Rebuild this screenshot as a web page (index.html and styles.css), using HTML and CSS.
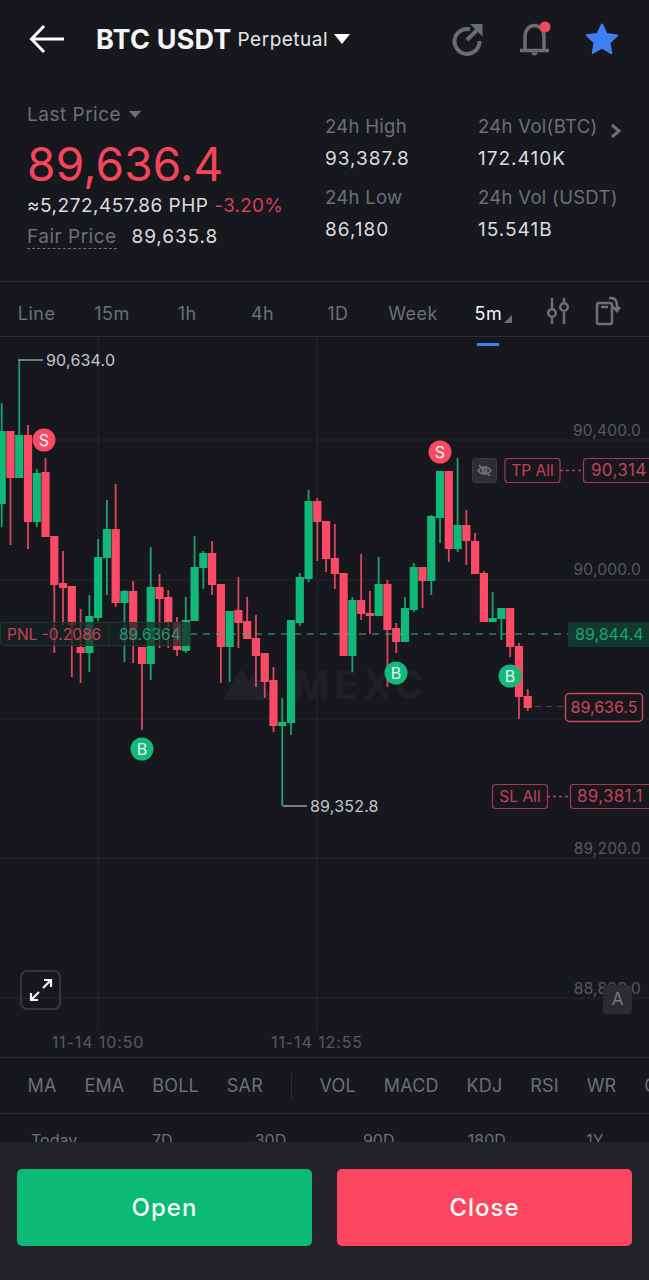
FILE: index.html
```html
<!DOCTYPE html>
<html lang="en">
<head>
  <meta charset="UTF-8" />
  <meta name="viewport" content="width=device-width, initial-scale=1.0">
  <title>BTC USDT Perpetual</title>
  <link rel="stylesheet" href="styles.css">
</head>
<body>
  <div class="app">
    <header class="top-bar">
      <svg class="back-icon" viewBox="0 0 36 30" width="36" height="30">
        <path d="M35 15H3M15 2 2.500 15 15 28" />
      </svg>
      <span class="pair">BTC USDT</span>
      <span class="pair-type">Perpetual</span>
      <span class="caret"></span>
      <div class="top-icons">
        <svg viewBox="0 0 34 34" width="34" height="34" class="share-icon">
          <path d="M19 7.300A12.500 12.500 0 1 0 28.500 19" />
          <path d="M16 18 28 6" />
          <path class="share-head" d="M19 2h12.500v12.500z" />
        </svg>
        <svg viewBox="0 0 34 38" width="34" height="38" class="bell-icon">
          <path d="M7 29V17C7 10 11 5.500 16.500 5.500S26 10 26 17v12" />
          <path d="M2 30.500h29" />
          <path class="bell-clapper" d="M13.500 32.500h6a3 3 0 0 1-6 0z" />
          <circle cx="27" cy="7" r="5.500" />
        </svg>
        <svg viewBox="0 0 34 34" width="34" height="34" class="star-icon">
          <path d="M17 2.500l4.600 9.600 10.500 1.400-7.700 7.300 1.900 10.400L17 25.600 7.700 31l1.900-10.400-7.700-7.300 10.500-1.400z" />
        </svg>
      </div>
    </header>

    <section class="stats">
      <div class="stats-main">
        <div class="last-label">Last Price <span class="caret caret-small"></span></div>
        <div class="last-price">89,636.4</div>
        <div class="fiat">≈5,272,457.86 PHP <span class="change">-3.20%</span></div>
        <div class="fair"><span class="fair-label">Fair Price</span> <span class="fair-value">89,635.8</span></div>
      </div>
      <div class="stats-grid">
        <div class="stat"><div class="stat-label">24h High</div><div class="stat-value">93,387.8</div></div>
        <div class="stat"><div class="stat-label">24h Vol(BTC)</div><div class="stat-value">172.410K</div></div>
        <div class="stat"><div class="stat-label">24h Low</div><div class="stat-value">86,180</div></div>
        <div class="stat"><div class="stat-label">24h Vol (USDT)</div><div class="stat-value">15.541B</div></div>
      </div>
      <svg class="more-icon" viewBox="0 0 12 16" width="12" height="16"><path d="M2 2l7 6-7 6" /></svg>
    </section>

    <nav class="tabs">
      <div class="tab-list">
        <span class="tab">Line</span>
        <span class="tab">15m</span>
        <span class="tab">1h</span>
        <span class="tab">4h</span>
        <span class="tab">1D</span>
        <span class="tab">Week</span>
        <span class="tab tab-active">5m<i class="tab-corner"></i></span>
      </div>
      <svg class="tab-icon" viewBox="0 0 22 28" width="22" height="28">
        <path d="M5 1v10M5 21v6M17 1v4M17 15v12" />
        <circle cx="5" cy="16" r="3.800" />
        <circle cx="17" cy="10" r="3.800" />
      </svg>
      <svg class="tab-icon" viewBox="0 0 26 30" width="26" height="30">
        <rect x="2" y="7" width="15" height="21" rx="2" />
        <path d="M6 11h7M14 2h2c4 0 6 3 6 8v4M18 11l4 4 3-4" />
      </svg>
    </nav>

    <div class="chart">
      <svg class="chart-svg" viewBox="0 337 649 720" width="649" height="720">
        <g class="grid-lines">
          <path d="M0 440H649M0 580H649M0 719H649M0 858H649M0 998H649M98 337V1030M317 337V1030" />
        </g>
        <g class="watermark">
          <path d="M224 700q0-2 1-4l14-24q2-3 4-1l6 10 5-8 20 27z" />
          <text x="293" y="699" class="watermark-text">MEXC</text>
        </g>
        <g id="candles"></g>

        <path class="leader" d="M18 360H43M283 806H307" />
        <text x="46" y="366" class="hi-lo">90,634.0</text>
        <text x="310" y="812" class="hi-lo">89,352.8</text>

        <g class="badge-sell"><circle cx="44" cy="440" r="11.500" /><text x="44" y="446">S</text></g>
        <g class="badge-sell"><circle cx="440" cy="452" r="11.500" /><text x="440" y="458">S</text></g>
        <g class="badge-buy"><circle cx="142" cy="749" r="11.500" /><text x="142" y="755">B</text></g>
        <g class="badge-buy"><circle cx="396" cy="673" r="11.500" /><text x="396" y="679">B</text></g>
        <g class="badge-buy"><circle cx="510" cy="676" r="11.500" /><text x="510" y="682">B</text></g>

        <text x="641" y="436" class="axis-label">90,400.0</text>
        <text x="641" y="575" class="axis-label">90,000.0</text>
        <text x="641" y="854" class="axis-label">89,200.0</text>
        <text x="641" y="994" class="axis-label">88,800.0</text>
        <text x="98" y="1048" class="date-label">11-14 10:50</text>
        <text x="317" y="1048" class="date-label">11-14 12:55</text>

        <path class="entry-line" d="M190 634H568" />
        <rect x="0.500" y="622.500" width="190" height="23" rx="3" class="pnl-box" />
        <path class="pnl-divider" d="M109 623V645" />
        <text x="7" y="640" class="pnl-text">PNL -0.2086</text>
        <text x="119" y="640" class="pnl-entry">89.6364</text>
        <rect x="568" y="622" width="85" height="25" rx="3" class="entry-tag" />
        <text x="575" y="640" class="entry-tag-text">89,844.4</text>

        <g class="eye-box">
          <rect x="472.500" y="458.500" width="24" height="24" rx="3" />
          <path d="M478 470.500c4-5 9-5 13 0-4 5-9 5-13 0z" />
          <circle cx="484.500" cy="470.500" r="2.200" />
          <path d="M479 465l11 11" />
        </g>

        <rect x="505" y="458.500" width="55" height="24" rx="3" class="order-box" />
        <text x="532.500" y="476" class="order-text">TP All</text>
        <path class="order-link" d="M560 470.500H583" />
        <rect x="583.500" y="458.500" width="80" height="24" rx="3" class="order-box" />
        <text x="591" y="476" class="order-price">90,314</text>

        <rect x="492.500" y="784.500" width="55" height="24" rx="3" class="order-box" />
        <text x="520" y="802" class="order-text">SL All</text>
        <path class="order-link" d="M547 796.500H570" />
        <rect x="570.500" y="784.500" width="90" height="24" rx="3" class="order-box" />
        <text x="577" y="802" class="order-price">89,381.1</text>

        <path class="price-link" d="M535 706.500H565" />
        <rect x="565.500" y="693.500" width="77" height="28" rx="4" class="price-box" />
        <text x="604" y="713" class="price-text">89,636.5</text>
      </svg>

      <div class="expand-btn">
        <svg viewBox="0 0 24 24" width="24" height="24">
          <path d="M14 10l8-8M15 2h7v7M10 14l-8 8M2 15v7h7" />
        </svg>
      </div>
      <div class="auto-btn">A</div>
    </div>

    <div class="indicators">
      <span>MA</span><span>EMA</span><span>BOLL</span><span>SAR</span>
      <i class="indicator-sep"></i>
      <span>VOL</span><span>MACD</span><span>KDJ</span><span>RSI</span><span>WR</span><span>OBV</span>
    </div>

    <div class="ranges">
      <span>Today</span><span>7D</span><span>30D</span><span>90D</span><span>180D</span><span>1Y</span>
    </div>

    <footer class="actions">
      <button class="action action-open">Open</button>
      <button class="action action-close">Close</button>
    </footer>
  </div>

  <script src="chart.js"></script>
</body>
</html>
```
FILE: styles.css
```css
* {
  box-sizing: border-box;
}
body {
  margin: 0;
  background: #17181d;
  font-family: 'Inter', 'Liberation Sans', sans-serif;
  color: #fff;
  overflow: hidden;
}
.app {
  width: 649px;
  height: 1280px;
  display: flex;
  flex-direction: column;
  overflow: hidden;
  position: relative;
}

/* top bar */
.top-bar {
  height: 78px;
  flex: none;
  display: flex;
  align-items: center;
  padding-left: 29px;
}
.back-icon {
  fill: none;
  stroke: #fff;
  stroke-width: 3;
  margin-right: 31px;
}
.pair {
  font-size: 27px;
  font-weight: 700;
  letter-spacing: 0.2px;
  color: #f4f4f5;
}
.pair-type {
  font-size: 19px;
  letter-spacing: 0.5px;
  margin-left: 6px;
  color: #e6e6e8;
}
.caret {
  width: 0;
  height: 0;
  margin-left: 6px;
  border-left: 8px solid transparent;
  border-right: 8px solid transparent;
  border-top: 10px solid #fff;
}
.caret-small {
  display: inline-block;
  margin-left: 2px;
  vertical-align: 3px;
  border-left-width: 6px;
  border-right-width: 6px;
  border-top: 7px solid #6c6f75;
}
.top-icons {
  margin-left: auto;
  margin-right: 30px;
  display: flex;
  align-items: center;
  gap: 33px;
}
.share-icon {
  fill: none;
  stroke: #696c72;
  stroke-width: 4;
}
.share-icon .share-head {
  fill: #696c72;
  stroke: none;
}
.bell-icon {
  fill: none;
  stroke: #696c72;
  stroke-width: 3.500;
}
.bell-icon .bell-clapper {
  fill: #696c72;
  stroke: none;
}
.bell-icon circle {
  fill: #f4485f;
  stroke: none;
}
.star-icon {
  fill: #3f7ff5;
  stroke: #3f7ff5;
  stroke-width: 2;
  stroke-linejoin: round;
}

/* price stats */
.stats {
  height: 204px;
  flex: none;
  display: flex;
  position: relative;
  border-bottom: 1px solid #2c2e33;
}
.stats-main {
  width: 325px;
  padding: 25px 0 0 27px;
}
.last-label {
  font-size: 19px;
  letter-spacing: 0.5px;
  color: #6c6f75;
  line-height: 24px;
}
.last-price {
  font-size: 46px;
  letter-spacing: 0.2px;
  line-height: 52px;
  margin-top: 11px;
  color: #f5455c;
}
.fiat {
  font-size: 19px;
  letter-spacing: 0.5px;
  line-height: 24px;
  margin-top: 4px;
  color: #dcdcde;
  white-space: nowrap;
}
.change {
  color: #d3405a;
  letter-spacing: 0.2px;
}
.fair {
  font-size: 19px;
  letter-spacing: 0.5px;
  line-height: 24px;
  margin-top: 7px;
  white-space: nowrap;
}
.fair-label {
  color: #6c6f75;
  border-bottom: 1px dashed #6c6f75;
  margin-right: 9px;
}
.fair-value {
  color: #dcdcde;
  letter-spacing: 0.9px;
}
.stats-grid {
  display: grid;
  grid-template-columns: 153px 1fr;
  grid-auto-rows: 71px;
  padding-top: 36px;
}
.stat-label {
  font-size: 18.500px;
  letter-spacing: 0.3px;
  line-height: 24px;
  color: #6c6f75;
  white-space: nowrap;
}
.stat-value {
  font-size: 19px;
  letter-spacing: 1px;
  line-height: 24px;
  margin-top: 9px;
  color: #dcdcde;
}
.more-icon {
  position: absolute;
  top: 45px;
  left: 610px;
  fill: none;
  stroke: #6c6f75;
  stroke-width: 3;
}

/* interval tabs */
.tabs {
  height: 55px;
  flex: none;
  display: flex;
  align-items: center;
  border-bottom: 1px solid #2c2e33;
}
.tab-list {
  display: grid;
  grid-template-columns: repeat(7, 75.3px);
  height: 100%;
  width: 547px;
  margin-left: -1px;
  margin-right: 1px;
}
.tab {
  font-size: 18px;
  letter-spacing: 0.5px;
  color: #6c6f75;
  text-align: center;
  line-height: 64px;
  position: relative;
}
.tab-active {
  color: #f4f4f5;
}
.tab-active::after {
  content: "";
  position: absolute;
  left: 26px;
  width: 22px;
  bottom: 0;
  height: 3px;
  background: #3f7ff5;
}
.tab-corner {
  position: absolute;
  left: 53px;
  top: 33px;
  width: 0;
  height: 0;
  border-left: 8px solid transparent;
  border-bottom: 8px solid #6c6f75;
}
.tab-icon {
  fill: none;
  stroke: #6c6f75;
  stroke-width: 2.500;
  margin-top: 4px;
}
.tab-icon + .tab-icon {
  margin-left: 26px;
}

/* chart */
.chart {
  height: 721px;
  flex: none;
  position: relative;
  border-bottom: 1px solid #2c2e33;
}
.chart-svg {
  display: block;
  font-family: 'Inter', 'Liberation Sans', sans-serif;
}
.grid-lines path {
  fill: none;
  stroke: #24262b;
  stroke-width: 1;
}
.watermark {
  fill: #212227;
}
.watermark-text {
  font-size: 39px;
  font-weight: 700;
  letter-spacing: 5px;
  fill: #1f2025;
}
.leader {
  fill: none;
  stroke: #9a9ca0;
  stroke-width: 1.500;
}
.hi-lo {
  font-size: 16px;
  letter-spacing: 0.2px;
  fill: #c4c5c8;
}
.badge-sell circle {
  fill: #f84a64;
}
.badge-buy circle {
  fill: #12b97b;
}
.badge-sell text,
.badge-buy text {
  font-size: 16px;
  fill: #e8f5ef;
  text-anchor: middle;
}
.axis-label {
  font-size: 15.500px;
  letter-spacing: 0.2px;
  fill: #55585e;
  text-anchor: end;
}
.date-label {
  font-size: 16px;
  letter-spacing: 0.9px;
  fill: #55585e;
  text-anchor: middle;
}
.entry-line {
  fill: none;
  stroke: rgba(50, 175, 130, 0.7);
  stroke-width: 1.500;
  stroke-dasharray: 7 6;
}
.pnl-box {
  fill: rgba(24, 36, 34, 0.72);
  stroke: #25352f;
}
.pnl-divider {
  stroke: #25352f;
}
.pnl-text {
  font-size: 15.500px;
  fill: #c2415a;
}
.pnl-entry {
  font-size: 15.500px;
  fill: #1f9a6f;
}
.entry-tag {
  fill: #113a2d;
}
.entry-tag-text {
  font-size: 16px;
  fill: #1fa274;
}
.eye-box rect {
  fill: #2c2e34;
  stroke: #3a3c42;
}
.eye-box path,
.eye-box circle {
  fill: none;
  stroke: #6e7177;
  stroke-width: 1.600;
}
.order-box {
  fill: #17181d;
  stroke: #a63a4c;
  stroke-width: 1.200;
}
.order-text {
  font-size: 15.500px;
  fill: #c2415a;
  text-anchor: middle;
}
.order-price {
  font-size: 17px;
  letter-spacing: 0.3px;
  fill: #c2415a;
}
.order-link {
  fill: none;
  stroke: #b83e52;
  stroke-width: 1.500;
  stroke-dasharray: 3 3;
}
.price-link {
  fill: none;
  stroke: #6a3540;
  stroke-width: 1.200;
  stroke-dasharray: 6 5;
}
.price-box {
  fill: #17181d;
  stroke: #d2445b;
  stroke-width: 1.500;
}
.price-text {
  font-size: 16px;
  fill: #d2445b;
  text-anchor: middle;
}
.expand-btn {
  position: absolute;
  left: 20px;
  top: 633px;
  width: 41px;
  height: 40px;
  border: 2px solid #33363c;
  border-radius: 7px;
  display: flex;
  align-items: center;
  justify-content: center;
}
.expand-btn svg {
  fill: none;
  stroke: #f1f1f2;
  stroke-width: 2.200;
}
.auto-btn {
  position: absolute;
  left: 603px;
  top: 648px;
  width: 29px;
  height: 29px;
  border-radius: 4px;
  background: #2a2c31;
  color: #75787e;
  font-size: 17px;
  line-height: 29px;
  text-align: center;
}

/* indicator row */
.indicators {
  height: 56px;
  flex: none;
  display: flex;
  align-items: center;
  gap: 27.800px;
  padding-left: 27.500px;
  font-size: 18px;
  letter-spacing: 0.2px;
  color: #6c6f75;
  white-space: nowrap;
  border-bottom: 1px solid #2c2e33;
}
.indicator-sep {
  width: 1px;
  height: 26px;
  flex: none;
  background: #2c2e33;
}

/* range row */
.ranges {
  flex: 1;
  display: grid;
  grid-template-columns: repeat(6, 108.200px);
  font-size: 16px;
  color: #6c6f75;
  text-align: center;
  line-height: 52px;
  overflow: hidden;
}

/* bottom buttons */
.actions {
  height: 138px;
  flex: none;
  display: flex;
  gap: 25px;
  padding: 27px 17px 34px;
  background: #212328;
}
.action {
  flex: 1;
  border: none;
  border-radius: 5px;
  color: #f2fbf7;
  font-family: inherit;
  font-size: 24px;
  font-weight: 500;
  letter-spacing: 1px;
}
.action-open {
  background: #0bba74;
}
.action-close {
  background: #fe4560;
}
```
FILE: chart.js
```js
// each row: colour, wick top, body top, body bottom, wick bottom (page y)
const candles = [
  ['g', 403, 431, 504, 527], ['r', 431, 431, 478, 545], ['g', 360, 435, 478, 478], ['r', 425, 435, 522, 549],
  ['g', 469, 473, 522, 527], ['r', 458, 472, 537, 537], ['r', 536, 536, 585, 653], ['r', 551, 583, 588, 625],
  ['r', 586, 586, 625, 677], ['r', 609, 647, 653, 683], ['g', 595, 616, 653, 672], ['g', 539, 557, 618, 621],
  ['g', 500, 529, 558, 595], ['r', 484, 529, 603, 607], ['g', 590, 591, 603, 662], ['r', 581, 591, 640, 663],
  ['r', 647, 647, 664, 730], ['g', 547, 587, 664, 680], ['r', 574, 587, 599, 648], ['r', 590, 597, 622, 648],
  ['r', 617, 622, 650, 656], ['g', 597, 620, 651, 653], ['g', 536, 567, 621, 621], ['g', 551, 553, 568, 589],
  ['r', 541, 553, 585, 595], ['r', 584, 584, 647, 683], ['g', 611, 611, 647, 682], ['r', 577, 610, 623, 648],
  ['r', 597, 621, 639, 639], ['r', 615, 638, 656, 687], ['r', 653, 653, 682, 698], ['r', 667, 680, 726, 732],
  ['g', 698, 722, 726, 806], ['g', 620, 620, 723, 735], ['g', 573, 577, 623, 626], ['g', 490, 501, 579, 582],
  ['r', 498, 501, 522, 561], ['r', 521, 521, 559, 572], ['r', 524, 558, 574, 589], ['r', 573, 573, 656, 656],
  ['g', 597, 600, 656, 672], ['r', 554, 600, 614, 620], ['r', 591, 613, 616, 634], ['g', 557, 584, 616, 616],
  ['r', 580, 584, 630, 687], ['r', 623, 628, 642, 653], ['g', 597, 608, 642, 642], ['g', 563, 567, 610, 612],
  ['r', 567, 567, 581, 608], ['g', 515, 516, 581, 595], ['g', 471, 471, 518, 543], ['r', 471, 471, 549, 562],
  ['g', 458, 525, 549, 552], ['r', 510, 525, 541, 565], ['r', 533, 541, 574, 574], ['r', 571, 573, 622, 622],
  ['g', 592, 618, 622, 622], ['g', 608, 608, 619, 640], ['r', 608, 608, 647, 657], ['r', 643, 646, 697, 719],
  ['r', 689, 696, 708, 711]
];

const NS = 'http://www.w3.org/2000/svg';
const group = document.getElementById('candles');
const colors = { r: ['#fb4a65', '#d9475f'], g: ['#10b97a', '#1d9f72'] };

function addRect(x, y, w, h, fill) {
  const rect = document.createElementNS(NS, 'rect');
  rect.setAttribute('x', x);
  rect.setAttribute('y', y);
  rect.setAttribute('width', w);
  rect.setAttribute('height', h);
  rect.setAttribute('fill', fill);
  group.appendChild(rect);
}

candles.forEach((c, i) => {
  const x = 1.7 + i * 8.767;
  addRect(x - 0.9, c[1], 1.8, c[4] - c[1], colors[c[0]][1]);
  addRect(x - 4.1, c[2], 8.2, c[3] - c[2], colors[c[0]][0]);
});
```
